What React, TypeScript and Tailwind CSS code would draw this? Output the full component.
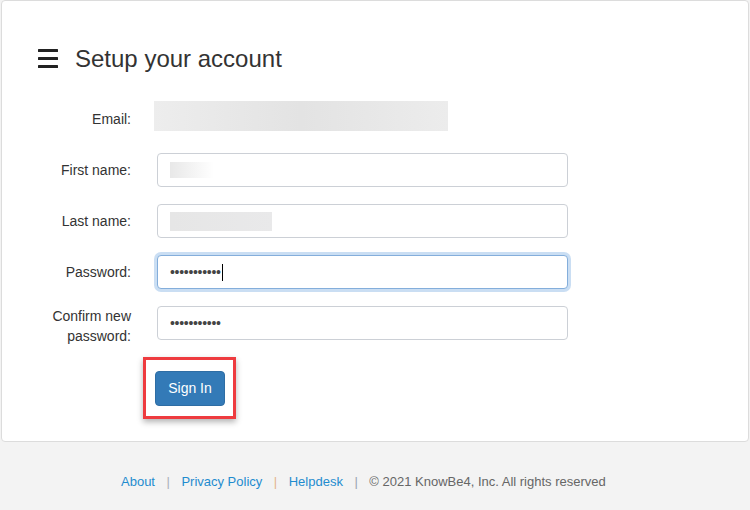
const Hamburger = () => (
  <svg width="20" height="19" viewBox="0 0 20 19" fill="#222">
    <rect x="0" y="0" width="20" height="3" rx="0.5" />
    <rect x="0" y="8" width="20" height="3" rx="0.5" />
    <rect x="0" y="16" width="20" height="3" rx="0.5" />
  </svg>
);

const Field = ({
  label,
  children,
  focused,
  labelClass = "",
}: {
  label: React.ReactNode;
  children?: React.ReactNode;
  focused?: boolean;
  labelClass?: string;
}) => (
  <div className="flex h-[34px] items-center">
    <div className={`w-[129px] text-right text-[14px] leading-[20px] text-[#333] ${labelClass}`}>{label}</div>
    <div
      className={`ml-[26px] flex h-[34px] w-[411px] items-center rounded-[4px] border bg-white px-[12px] ${
        focused
          ? "border-[#84aedb] shadow-[0_0_0_3px_rgba(102,160,220,0.35)]"
          : "border-[#ccd0d6]"
      }`}
    >
      {children}
    </div>
  </div>
);

const Blur = ({ w, h, from, to }: { w: string; h: string; from: string; to: string }) => (
  <div className={`${w} ${h} bg-gradient-to-r ${from} ${to}`} />
);

export default function App() {
  return (
    <div className="min-h-screen bg-[#f3f3f3] font-['Liberation_Sans',Arial,sans-serif]">
      <div className="mx-[1px] h-[442px] rounded-[4px] border border-[#dcdcdc] bg-white">
        {/* Header */}
        <div className="mt-[40px] flex h-[34px] items-center pl-[36px]">
          <Hamburger />
          <h1 className="mt-[1px] ml-[17px] text-[24px] leading-none text-[#333]">Setup your account</h1>
        </div>

        {/* Form */}
        <div className="mt-[26px] flex flex-col">
          <div className="flex items-center">
            <div className="w-[129px] pt-[6px] text-right text-[14px] text-[#333]">Email:</div>
            <div className="ml-[23px] h-[30px] w-[294px] bg-gradient-to-r from-[#ededed] via-[#e3e3e3] to-[#ececec]" />
          </div>

          <div className="mt-[22px] flex flex-col gap-[17px]">
            <Field label="First name:">
              <Blur w="w-[44px]" h="h-[16px]" from="from-[#e8e8e8]" to="to-[#ffffff]" />
            </Field>
            <Field label="Last name:">
              <Blur w="w-[102px]" h="h-[19px]" from="from-[#e6e6e6]" to="to-[#e9e9ea]" />
            </Field>
            <Field label="Password:" focused>
              <span className="text-[14px] leading-none tracking-[-0.3px] text-[#444]">•••••••••••</span>
              <span className="ml-[1px] inline-block h-[17px] w-[1px] bg-black" />
            </Field>
            <Field
              labelClass="pt-[5px]"
              label={
                <>
                  Confirm new
                  <br />
                  password:
                </>
              }
            >
              <span className="text-[14px] leading-none tracking-[-0.3px] text-[#444]">•••••••••••</span>
            </Field>
          </div>

          {/* Button */}
          <div className="mt-[17px] flex pl-[141px]">
            <div className="border-[3px] border-[#ee3b3f] pt-[11px] pr-[8px] pb-[10px] pl-[9px] shadow-[0_3px_6px_rgba(0,0,0,0.3)]">
              <button className="h-[35px] w-[70px] rounded-[4px] border border-[#2e6da4] bg-[#337ab7] text-[14px] text-white">
                Sign In
              </button>
            </div>
          </div>
        </div>
      </div>

      {/* Footer */}
      <div className="flex items-center gap-[11.5px] pt-[32px] pl-[121px] text-[13px] leading-[16px]">
        <a className="text-[#1f8ccf]">About</a>
        <span className="text-[#aab0b8]">|</span>
        <a className="text-[#1f8ccf]">Privacy Policy</a>
        <span className="text-[#e3b38c]">|</span>
        <a className="text-[#1f8ccf]">Helpdesk</a>
        <span className="text-[#9aa4b0]">|</span>
        <span className="text-[#666]">© 2021 KnowBe4, Inc. All rights reserved</span>
      </div>
    </div>
  );
}
